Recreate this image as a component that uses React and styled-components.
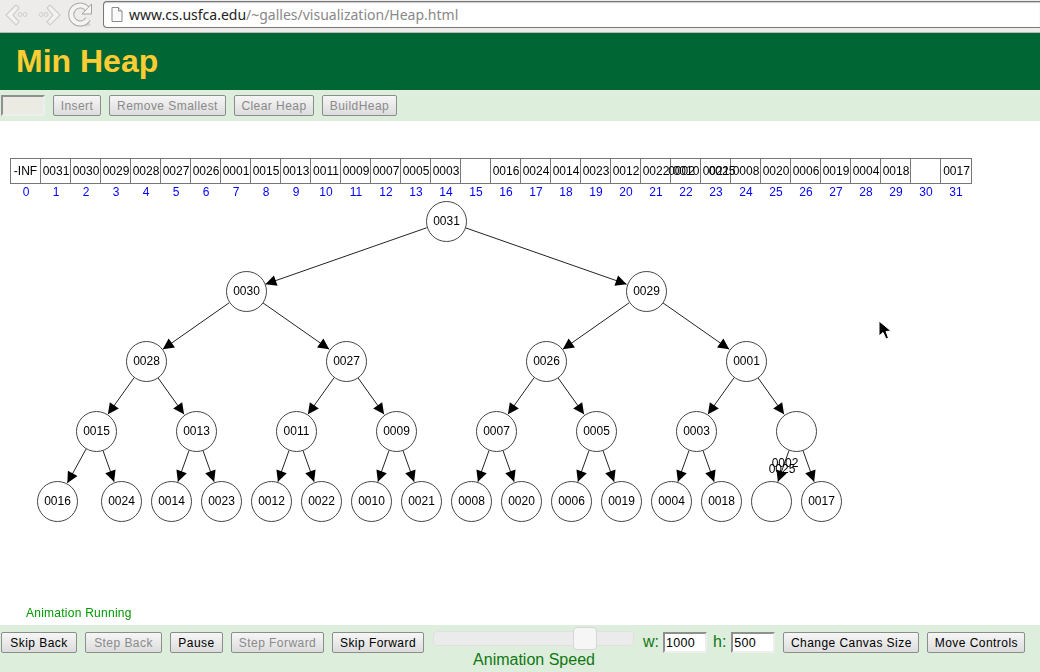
import React from "react";
import styled, { createGlobalStyle } from "styled-components";

const GlobalStyle = createGlobalStyle`
  html, body { margin: 0; padding: 0; background: #fff; }
  body { font-family: "Liberation Sans", Arial, sans-serif; }
`;

const cells = [
  "-INF", "0031", "0030", "0029", "0028", "0027", "0026", "0001", "0015", "0013", "0011",
  "0009", "0007", "0005", "0003", "", "0016", "0024", "0014", "0023", "0012", "0022",
  "0010", "0021", "0008", "0020", "0006", "0019", "0004", "0018", "", "0017",
];

// heap index -> centre of the circle, children of i are 2i and 2i + 1
const level4 = [57.5, 121, 171, 221, 271, 321, 371, 421, 471, 521, 571, 621, 671, 721, 771, 821];
const centres = { 1: [446, 221] };
[246, 646].forEach((x, i) => (centres[2 + i] = [x, 291]));
[146, 346, 546, 746].forEach((x, i) => (centres[4 + i] = [x, 361]));
[96, 196, 296, 396, 496, 596, 696, 796].forEach((x, i) => (centres[8 + i] = [x, 431]));
level4.forEach((x, i) => (centres[16 + i] = [x, 501]));

const R = 20.5;
const edges = [];
for (let i = 2; i < 32; i++) edges.push([Math.floor(i / 2), i]);

function Edge({ from, to }) {
  const [x1, y1] = centres[from];
  const [x2, y2] = centres[to];
  const len = Math.hypot(x2 - x1, y2 - y1);
  const ux = (x2 - x1) / len;
  const uy = (y2 - y1) / len;
  const sx = x1 + ux * R;
  const sy = y1 + uy * R;
  const tx = x2 - ux * R;
  const ty = y2 - uy * R;
  const bx = tx - ux * 11;
  const by = ty - uy * 11;
  const px = -uy * 5.5;
  const py = ux * 5.5;
  return (
    <g>
      <line x1={sx} y1={sy} x2={tx} y2={ty} stroke="#222" strokeWidth="1" />
      <polygon points={`${tx},${ty} ${bx + px},${by + py} ${bx - px},${by - py}`} fill="#000" />
    </g>
  );
}

const Page = styled.div`
  width: 1040px;
  height: 672px;
  display: flex;
  flex-direction: column;
  overflow: hidden;
`;

const BrowserBar = styled.div`
  height: 32px;
  flex: none;
  display: flex;
  align-items: flex-start;
  background: #edeceb;
  border-bottom: 1px solid #b9b8b5;
`;

const NavIcons = styled.svg`
  width: 103px;
  height: 32px;
  flex: none;
`;

const UrlField = styled.div`
  flex: 1;
  height: 25px;
  margin: 1px 0 0 0;
  display: flex;
  align-items: center;
  gap: 6px;
  padding-left: 7px;
  background: #fff;
  border: 1px solid #777;
  border-right: none;
  border-radius: 4px 0 0 4px;
  box-shadow: inset 0 1px 1px #ccc;
  font-family: "Noto Sans", "DejaVu Sans", sans-serif;
  font-size: 14px;
  white-space: nowrap;
`;

const Host = styled.span`
  color: #222;
`;

const UrlPath = styled.span`
  color: #888;
`;

const Header = styled.header`
  height: 57px;
  flex: none;
  display: flex;
  align-items: center;
  padding-left: 16px;
  background: #006633;
`;

const Title = styled.h1`
  margin: 0;
  font-size: 32px;
  font-weight: bold;
  color: #ffcc33;
`;

const TopControls = styled.div`
  height: 31px;
  flex: none;
  display: flex;
  align-items: flex-start;
  gap: 8px;
  padding: 5px 0 0 1px;
  box-sizing: border-box;
  background: #ddeedd;
`;

const TextBox = styled.div`
  width: ${(p) => p.$w}px;
  height: 21px;
  box-sizing: border-box;
  padding-left: 1px;
  border: 2px solid;
  border-color: #8f8f8f #eeeeee #eeeeee #8f8f8f;
  background: ${(p) => (p.$off ? "#ebebe4" : "#fff")};
  font-size: 12.5px;
  letter-spacing: 0.3px;
  line-height: 18px;
  color: #000;
`;

const Button = styled.div`
  height: 21px;
  box-sizing: border-box;
  width: ${(p) => p.$w}px;
  flex: none;
  text-align: center;
  line-height: 20px;
  font-size: 12px;
  letter-spacing: 0.45px;
  border: 1px solid #8c8c8c;
  border-radius: 2px;
  background: linear-gradient(#f6f6f6, #dcdcdc);
  color: ${(p) => (p.$off ? "#8a8a8a" : "#000")};
`;

const Canvas = styled.main`
  flex: 1;
  position: relative;
  display: flex;
  flex-direction: column;
  padding: 37px 0 5px 11px;
  will-change: transform;
`;

const ArrayRow = styled.div`
  display: flex;
  position: relative;
  width: 961px;
`;

const Cell = styled.div`
  width: ${(p) => (p.$first || p.$last ? 31 : 30)}px;
  height: 26px;
  box-sizing: border-box;
  ${(p) => (p.$first ? "margin-left: -1px;" : "padding-left: 1px;")}
  border: 1px solid #777;
  border-left: ${(p) => (p.$first ? "1px solid #777" : "none")};
  text-align: center;
  font-size: 12px;
  line-height: 24px;
  white-space: nowrap;
  color: #000;
`;

const IndexRow = styled.div`
  display: flex;
  margin-top: 1px;
`;

const IndexLabel = styled.div`
  width: 30px;
  text-align: center;
  font-size: 12px;
  line-height: 14px;
  color: #0000ff;
`;

const Tree = styled.svg`
  position: absolute;
  left: 0;
  top: 0;
  width: 1040px;
  height: 504px;
  pointer-events: none;
`;

const Node = styled.div.attrs((p) => ({
  style: { left: Math.floor(p.$x) - 20, top: p.$y - 121 - 20 },
}))`
  position: absolute;
  width: 41px;
  height: 41px;
  box-sizing: border-box;
  border: 1px solid #444;
  border-radius: 50%;
  background: #fff;
  text-align: center;
  font-size: 12px;
  line-height: 39px;
  color: #000;
`;

const Floating = styled.span.attrs((p) => ({
  style: { left: p.$x, top: p.$y - 121 },
}))`
  position: absolute;
  transform: translate(-50%, -50%);
  font-size: 12px;
  line-height: 14px;
  color: #000;
`;

const Cursor = styled.svg`
  position: absolute;
  left: 877px;
  top: 198px;
  width: 16px;
  height: 22px;
`;

const Status = styled.div`
  margin-top: auto;
  padding-left: 15px;
  font-size: 12px;
  letter-spacing: 0.25px;
  line-height: 14px;
  color: #009900;
`;

const BottomControls = styled.footer`
  height: 47px;
  flex: none;
  display: flex;
  align-items: flex-start;
  gap: 8px;
  padding: 7px 0 0 1px;
  box-sizing: border-box;
  background: #ddeedd;
`;

const SpeedBlock = styled.div`
  width: 201px;
  margin-left: 1px;
  margin-top: -1px;
  display: flex;
  flex-direction: column;
  align-items: center;
`;

const Track = styled.div`
  position: relative;
  width: 100%;
  height: 15px;
  box-sizing: border-box;
  border: 1px solid #e0e0e0;
  border-radius: 4px;
  background: #ebebeb;
`;

const Handle = styled.div`
  position: absolute;
  left: 139px;
  top: -5px;
  width: 24px;
  height: 23px;
  box-sizing: border-box;
  border: 1px solid #d6d6d6;
  border-radius: 4px;
  background: #f6f6f6;
`;

const SpeedLabel = styled.div`
  margin: 5px 0 0 1px;
  font-size: 16px;
  line-height: 18px;
  color: #117711;
  white-space: nowrap;
`;

const SizeLabel = styled.span`
  font-size: 16px;
  line-height: 20px;
  color: #117711;
  margin-left: ${(p) => p.$ml}px;
  margin-right: ${(p) => p.$mr}px;
`;

function BrowserIcons() {
  const ghost = { fill: "#f4f3f2", stroke: "#cfcecb", strokeWidth: 1.2 };
  return (
    <NavIcons viewBox="0 0 103 32">
      <path d="M16 5 L6 15 L16 25 L19 22 L13 15 L19 8 Z" {...ghost} />
      <circle cx="20" cy="14.5" r="2" fill="none" stroke="#d0cfcc" />
      <circle cx="25" cy="14.5" r="2" fill="none" stroke="#d0cfcc" />
      <path d="M50 5 L60 15 L50 25 L47 22 L53 15 L47 8 Z" {...ghost} />
      <circle cx="41" cy="14.5" r="2" fill="none" stroke="#d0cfcc" />
      <circle cx="46" cy="14.5" r="2" fill="none" stroke="#d0cfcc" />
      <ellipse cx="82" cy="24.5" rx="9" ry="2" fill="#d5d4d1" />
      <path d="M88 10 A9 9 0 1 0 88 19" fill="none" stroke="#a9a8a5" strokeWidth="6" />
      <path d="M88 10 A9 9 0 1 0 88 19" fill="none" stroke="#f4f4f2" strokeWidth="4" />
      <path d="M82 14 L91.5 14 L91.5 4 Z" fill="#f4f4f2" stroke="#a3a29f" />
    </NavIcons>
  );
}

function DocIcon() {
  return (
    <svg width="12" height="15" viewBox="0 0 12 15">
      <path d="M1 .5 H7.5 L11 4 V14.5 H1 Z" fill="#fafafa" stroke="#8a8a8a" />
      <path d="M7.5 .5 V4 H11" fill="#e4e4e4" stroke="#8a8a8a" />
    </svg>
  );
}

export default function App() {
  return (
    <Page>
      <GlobalStyle />
      <BrowserBar>
        <BrowserIcons />
        <UrlField>
          <DocIcon />
          <span>
            <Host>www.cs.usfca.edu</Host>
            <UrlPath>/~galles/visualization/Heap.html</UrlPath>
          </span>
        </UrlField>
      </BrowserBar>
      <Header>
        <Title>Min Heap</Title>
      </Header>
      <TopControls>
        <TextBox $w={44} $off />
        <Button $w={48} $off>Insert</Button>
        <Button $w={117} $off>Remove Smallest</Button>
        <Button $w={80} $off>Clear Heap</Button>
        <Button $w={75} $off>BuildHeap</Button>
      </TopControls>
      <Canvas>
        <ArrayRow>
          {cells.map((c, i) => (
            <Cell key={i} $first={i === 0} $last={i === 31}>{c}</Cell>
          ))}
        </ArrayRow>
        <IndexRow>
          {cells.map((_, i) => (
            <IndexLabel key={i}>{i}</IndexLabel>
          ))}
        </IndexRow>
        <Floating $x={681.5} $y={171}>0002</Floating>
        <Floating $x={722} $y={171}>0025</Floating>
        <Tree viewBox="0 121 1040 504">
          {edges.map(([a, b]) => (
            <Edge key={b} from={a} to={b} />
          ))}
        </Tree>
        {Object.keys(centres).map((i) => (
          <Node key={i} $x={centres[i][0]} $y={centres[i][1]}>
            {cells[i]}
          </Node>
        ))}
        <Floating $x={785} $y={463}>0002</Floating>
        <Floating $x={782} $y={469}>0025</Floating>
        <Cursor viewBox="0 0 16 22">
          <path d="M2 2 V17 L6 13.5 L9 20 L11.5 19 L9 12.5 L14 12 Z" fill="#000" stroke="#fff" />
        </Cursor>
        <Status>Animation Running</Status>
      </Canvas>
      <BottomControls>
        <Button $w={76}>Skip Back</Button>
        <Button $w={77} $off>Step Back</Button>
        <Button $w={53}>Pause</Button>
        <Button $w={93} $off>Step Forward</Button>
        <Button $w={92}>Skip Forward</Button>
        <SpeedBlock>
          <Track>
            <Handle />
          </Track>
          <SpeedLabel>Animation Speed</SpeedLabel>
        </SpeedBlock>
        <SizeLabel $ml={1} $mr={-4}>w:</SizeLabel>
        <TextBox $w={44}>1000</TextBox>
        <SizeLabel $ml={-2} $mr={-3}>h:</SizeLabel>
        <TextBox $w={44}>500</TextBox>
        <Button $w={136}>Change Canvas Size</Button>
        <Button $w={98}>Move Controls</Button>
      </BottomControls>
    </Page>
  );
}
